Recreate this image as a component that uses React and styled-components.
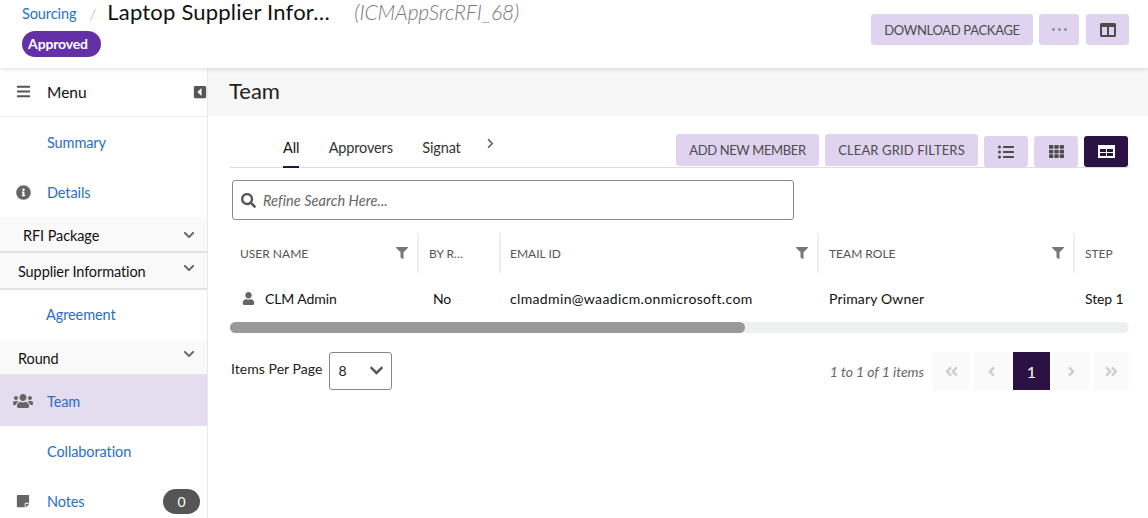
import React from 'react';
import styled, { createGlobalStyle } from 'styled-components';
import { FaBars, FaCaretSquareLeft, FaInfoCircle, FaChevronDown, FaUsers, FaStickyNote, FaSearch, FaFilter, FaUser, FaListUl, FaTh, FaAngleDoubleLeft, FaAngleLeft, FaAngleRight, FaAngleDoubleRight, FaChevronRight } from 'react-icons/fa';

const Global = createGlobalStyle`
  html, body { margin: 0; padding: 0; background: #fff; }
  * { box-sizing: border-box; }
  #root { width: 1148px; height: 518px; overflow: hidden; font-family: "Lato", "Open Sans", sans-serif; color: #1a1a1a; }
`;

const Page = styled.div`display: flex; flex-direction: column; height: 518px; overflow: hidden;`;

const Header = styled.header`
  position: relative; z-index: 2; height: 68px; flex: none; padding: 0 19px 0 22px;
  display: flex; justify-content: space-between; background: #fff;
  box-shadow: 0 1px 5px rgba(0,0,0,.14);
`;
const Crumbs = styled.div`display: flex; flex-direction: column; align-items: flex-start;`;
const CrumbRow = styled.div`display: flex; align-items: flex-start; height: 31px;`;
const CrumbLink = styled.a`font-size: 14.5px; line-height: 28px; color: #1f74c4; letter-spacing: -.1px;`;
const Slash = styled.span`font-size: 16px; line-height: 28px; color: #aaa; font-weight: 300; margin: 0 11px 0 13px;`;
const Title = styled.h1`margin: 0; font-size: 22px; line-height: 24px; font-weight: 400; color: #111; letter-spacing: .2px; width: 247px; white-space: nowrap;`;
const Code = styled.em`font-size: 21px; line-height: 23px; font-weight: 300; color: #777; letter-spacing: -.15px;`;
const Badge = styled.span`
  height: 26px; width: 79px; padding: 0 7px 2px 0; border-radius: 13px; background: #6430a5; color: #fff;
  font-size: 14px; font-weight: 700; display: flex; align-items: center; justify-content: center; letter-spacing: -.15px;
`;
const HeadActions = styled.div`display: flex; gap: 6px; padding-top: 14px;`;
const Button = styled.button`
  height: ${p => p.$h || 31}px; width: ${p => p.$w}px; margin-top: ${p => p.$mt || 0}px; margin-left: ${p => p.$ml || 0}px;
  padding: 0; border: 0; border-radius: 3px;
  background: ${p => p.$dark ? '#2a1245' : '#dfd3f0'}; color: ${p => p.$dark ? '#fff' : '#4c4c4c'};
  font-family: inherit; font-size: 13px; letter-spacing: ${p => p.$ls ?? 0}px;
  display: flex; align-items: center; justify-content: center; flex: none;
`;

const Body = styled.div`display: flex; flex: 1; min-height: 0;`;
const Side = styled.aside`width: 208px; flex: none; border-right: 1px solid #e8e8e8;`;
const MenuHead = styled.div`
  height: 49px; border-bottom: 1px solid #eee; display: flex; align-items: center; padding: 0 0 1px 16px;
  font-size: 15.500px; color: #111; background: #fff;
`;
const MenuLabel = styled.span`margin-left: 16px; flex: 1;`;
const NavRow = styled.div`
  height: 50px; display: flex; align-items: center; position: relative; padding: 0 0 ${p => p.$pb || 0}px ${p => p.$pl || 47}px;
  font-size: 14.5px; color: #2a6fc4; background: ${p => p.$active ? '#e4dcef' : '#fff'}; letter-spacing: -.1px;
`;
const NavIcon = styled.span`
  position: absolute; left: ${p => p.$left || 16}px; top: 0; bottom: 0; display: flex; align-items: center; color: #666;
`;
const Count = styled.span`
  position: absolute; right: 7px; top: 13px; width: 37px; height: 25px; border-radius: 13px; background: #555;
  color: #fff; font-size: 14px; display: flex; align-items: center; justify-content: center;
`;
const Group = styled.div`
  height: ${p => p.$h}px; display: flex; align-items: center; justify-content: space-between;
  background: #f9f9f9; border-bottom: 2px solid #e3e3e3; padding: 2px 12px 0 ${p => p.$pad}px;
  font-size: 14.5px; color: #111; letter-spacing: -.1px;
`;
const Chevron = styled(FaChevronDown)`color: #666; font-size: 12px; margin-top: ${p => p.$up ? -8 : 0}px;`;

const Main = styled.main`flex: 1; min-width: 0;`;
const MainHead = styled.div`height: 48px; background: #f7f7f7; display: flex; align-items: center; padding: 0 0 3px 21px; font-size: 22px; color: #222;`;
const Content = styled.div`padding: 0 19px 0 22px;`;
const TabBar = styled.div`height: 52px; display: flex; justify-content: space-between; border-bottom: 1px solid #ddd; margin-bottom: 12px;`;
const Tabs = styled.div`display: flex; padding: 15px 0 0 53px; gap: 29.500px; font-size: 14.5px; color: #333;`;
const Tab = styled.span`
  height: 37px; padding-top: 8px; border-bottom: 2px solid ${p => p.$on ? '#2a1245' : 'transparent'};
  color: ${p => p.$on ? '#111' : '#333'}; letter-spacing: -.15px;
`;
const TabNext = styled(FaChevronRight)`font-size: 11px; color: #666; margin: 7px 0 0 -5px;`;
const GridActions = styled.div`display: flex; gap: 6px; align-items: flex-start; padding: 20px 1px 0 0;`;
const Search = styled.div`
  width: 562px; height: 40px; margin-left: 2px; border: 1px solid #888; border-radius: 3px; display: flex; align-items: center;
  padding-left: 8px; gap: 7px; font-size: 14.5px; font-style: italic; color: #666; letter-spacing: .05px;
`;
const Table = styled.div`margin-top: 13px; width: 899px; overflow: hidden;`;
const Row = styled.div`
  display: grid; grid-template-columns: 189px 82px 318px 256px 54px; height: ${p => p.$h}px; align-items: center;
  padding-top: ${p => p.$pt || 0}px;
`;
const Th = styled.div`
  height: 40px; display: flex; align-items: center; justify-content: space-between; padding: 1px 9px 0 ${p => p.$pl || 10}px;
  border-right: ${p => p.$last ? 0 : '2px solid #eee'}; font-size: 12px; color: #555; white-space: nowrap;
`;
const Td = styled.div`
  padding: 0 10px 0 ${p => p.$pl || 10}px; font-size: 14px; color: #111; display: flex; align-items: center; gap: 10px;
  white-space: nowrap; letter-spacing: ${p => p.$ls ?? -.1}px;
`;
const ScrollTrack = styled.div`height: 11px; width: 899px; border-radius: 6px; background: #eef0f0;`;
const ScrollThumb = styled.div`height: 11px; width: 515px; border-radius: 6px; background: #999;`;
const Pager = styled.div`display: flex; align-items: center; justify-content: space-between; margin-top: 19px; width: 899px;`;
const PerPage = styled.div`display: flex; align-items: center; gap: 7px; padding-left: 1px; font-size: 14px; color: #222; letter-spacing: .05px;`;
const PerLabel = styled.span`padding-bottom: 5px;`;
const Select = styled.div`
  width: 63px; height: 38px; border: 1px solid #888; border-radius: 3px; display: flex; align-items: center; justify-content: space-between;
  padding: 0 7px 1px 8px; font-size: 14px; color: #222;
`;
const PageNav = styled.div`display: flex; align-items: center;`;
const PageInfo = styled.em`font-size: 14px; color: #666; margin-right: 6px; letter-spacing: -.08px;`;
const PageBtn = styled.span`
  width: ${p => p.$w || 37}px; height: 38px; margin-left: 3px; display: flex; align-items: center; justify-content: center;
  background: ${p => p.$on ? '#2a1245' : '#fafafa'}; color: ${p => p.$on ? '#fff' : '#ccc'}; font-size: ${p => p.$on ? 16 : 15}px;
`;

const Columns = () => (
  <svg width="16" height="14" viewBox="0 0 16 14"><path fill="#4c4c4c" fillRule="evenodd" d="M0 1.500C0 .7.7 0 1.500 0h13c.8 0 1.500.7 1.500 1.500v11c0 .8-.7 1.500-1.500 1.500h-13C.7 14 0 13.300 0 12.500zM2 4v8h5V4zm7 0v8h5V4z"/></svg>
);
const Cards = () => (
  <svg width="17" height="13" viewBox="0 0 17 13"><path fill="#fff" fillRule="evenodd" d="M0 0h17v13H0zM2 4v3h6V4zm7 0v3h6V4zM2 8v3h6V8zm7 0v3h6V8z"/></svg>
);
const Dots = () => (
  <svg width="15" height="3" viewBox="0 0 15 3"><g fill="#777"><circle cx="1.500" cy="1.500" r="1.200"/><circle cx="7.500" cy="1.500" r="1.200"/><circle cx="13.500" cy="1.500" r="1.200"/></g></svg>
);
const Funnel = styled(FaFilter)`color: #777; font-size: 12px; flex: none; margin-top: -2px;`;

export default function App() {
  return (
    <Page>
      <Global />
      <Header>
        <Crumbs>
          <CrumbRow>
            <CrumbLink>Sourcing</CrumbLink>
            <Slash>/</Slash>
            <Title>Laptop Supplier Infor…</Title>
            <Code>(ICMAppSrcRFI_68)</Code>
          </CrumbRow>
          <Badge>Approved</Badge>
        </Crumbs>
        <HeadActions>
          <Button $w={162} $ls={-.31}>DOWNLOAD PACKAGE</Button>
          <Button $w={40}><Dots /></Button>
          <Button $w={43} $ml={1}><Columns /></Button>
        </HeadActions>
      </Header>
      <Body>
        <Side>
          <MenuHead>
            <FaBars size={15} color="#555" />
            <MenuLabel>Menu</MenuLabel>
            <FaCaretSquareLeft size={14} color="#555" />
          </MenuHead>
          <NavRow>Summary</NavRow>
          <NavRow><NavIcon><FaInfoCircle size={15} /></NavIcon>Details</NavRow>
          <Group $h={36} $pad={23}>RFI Package<Chevron /></Group>
          <Group $h={37} $pad={18}>Supplier Information<Chevron $up /></Group>
          <NavRow $pl={46} $pb={1}>Agreement</NavRow>
          <Group $h={36} $pad={18}>Round<Chevron $up /></Group>
          <NavRow $active><NavIcon $left={13}><FaUsers size={20} /></NavIcon>Team</NavRow>
          <NavRow>Collaboration</NavRow>
          <NavRow><NavIcon><FaStickyNote size={14} /></NavIcon>Notes<Count>0</Count></NavRow>
        </Side>
        <Main>
          <MainHead>Team</MainHead>
          <Content>
            <TabBar>
              <Tabs>
                <Tab $on>All</Tab>
                <Tab>Approvers</Tab>
                <Tab>Signat</Tab>
                <TabNext />
              </Tabs>
              <GridActions>
                <Button $w={143} $h={32} $mt={-2} $ls={-.36}>ADD NEW MEMBER</Button>
                <Button $w={153} $h={32} $mt={-2} $ls={.12}>CLEAR GRID FILTERS</Button>
                <Button $w={44}><FaListUl size={16} color="#4c4c4c" /></Button>
                <Button $w={44}><FaTh size={15} color="#4c4c4c" /></Button>
                <Button $w={44} $dark><Cards /></Button>
              </GridActions>
            </TabBar>
            <Search><FaSearch size={15} color="#555" />Refine Search Here...</Search>
            <Table>
              <Row $h={40}>
                <Th>USER NAME<Funnel /></Th>
                <Th>BY R…</Th>
                <Th $pl={9}>EMAIL ID<Funnel /></Th>
                <Th>TEAM ROLE<Funnel /></Th>
                <Th $last>STEP</Th>
              </Row>
              <Row $h={49} $pt={1}>
                <Td><FaUser size={13} color="#666" style={{ marginLeft: 2 }} />CLM Admin</Td>
                <Td $pl={14}>No</Td>
                <Td $pl={9} $ls={.35}>clmadmin@waadicm.onmicrosoft.com</Td>
                <Td $ls={.15}>Primary Owner</Td>
                <Td>Step 1</Td>
              </Row>
            </Table>
            <ScrollTrack><ScrollThumb /></ScrollTrack>
            <Pager>
              <PerPage><PerLabel>Items Per Page</PerLabel>
                <Select>8<FaChevronDown size={15} color="#555" /></Select>
              </PerPage>
              <PageNav>
                <PageInfo>1 to 1 of 1 items</PageInfo>
                <PageBtn><FaAngleDoubleLeft /></PageBtn>
                <PageBtn><FaAngleLeft /></PageBtn>
                <PageBtn $on>1</PageBtn>
                <PageBtn><FaAngleRight /></PageBtn>
                <PageBtn $w={36}><FaAngleDoubleRight /></PageBtn>
              </PageNav>
            </Pager>
          </Content>
        </Main>
      </Body>
    </Page>
  );
}
